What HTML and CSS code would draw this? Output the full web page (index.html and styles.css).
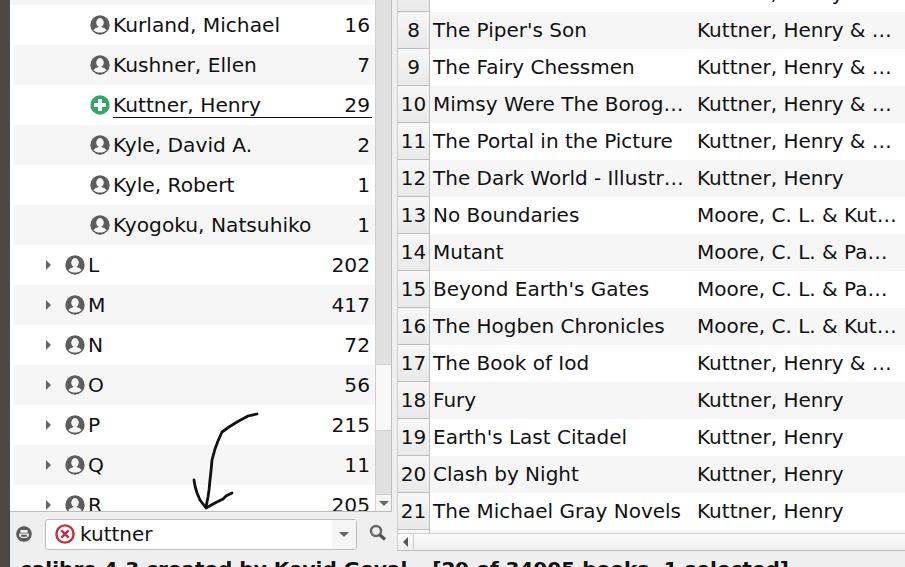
FILE: index.html
```html
<!DOCTYPE html>
<html lang="en">
<head>
    <meta charset="UTF-8">
    <title>calibre</title>
    <link rel="stylesheet" href="styles.css">
</head>
<body>
    <svg class="defs" width="0" height="0">
        <symbol id="person" viewBox="0 0 20 20">
            <circle cx="10" cy="10" r="9.700" fill="#5c5c5c"/>
            <ellipse cx="10" cy="7.600" rx="3.800" ry="4.500" fill="#f4f4f4"/>
            <path d="M3.400 15.300c.8-2.200 4-2.500 5-3.500h3.200c1 1 4.200 1.300 5 3.500-1.500 1.500-4 2.300-6.600 2.300s-5.100-.8-6.600-2.300z" fill="#f4f4f4"/>
        </symbol>
    </svg>

    <div class="side-strip"></div>

    <div class="main">
        <div class="panes">
            <div class="left">
                <div class="tree-wrap">
                    <div class="tree">
                        <div class="row child"><svg class="ic"><use href="#person"/></svg><span class="name">Kurland, Michael</span><span class="count">16</span></div>
                        <div class="row child alt"><svg class="ic"><use href="#person"/></svg><span class="name">Kushner, Ellen</span><span class="count">7</span></div>
                        <div class="row child selected">
                            <svg class="ic" viewBox="0 0 20 20"><circle cx="10" cy="10" r="9.700" fill="#2ea862"/><path d="M8 4h4v4h4v4h-4v4H8v-4H4V8h4z" fill="#fff"/></svg>
                            <span class="underlined"><span class="name">Kuttner, Henry</span><span class="count">29</span></span>
                        </div>
                        <div class="row child alt"><svg class="ic"><use href="#person"/></svg><span class="name">Kyle, David A.</span><span class="count">2</span></div>
                        <div class="row child"><svg class="ic"><use href="#person"/></svg><span class="name">Kyle, Robert</span><span class="count">1</span></div>
                        <div class="row child alt"><svg class="ic"><use href="#person"/></svg><span class="name">Kyogoku, Natsuhiko</span><span class="count">1</span></div>
                        <div class="row"><span class="arrow"></span><svg class="ic"><use href="#person"/></svg><span class="name">L</span><span class="count">202</span></div>
                        <div class="row alt"><span class="arrow"></span><svg class="ic"><use href="#person"/></svg><span class="name">M</span><span class="count">417</span></div>
                        <div class="row"><span class="arrow"></span><svg class="ic"><use href="#person"/></svg><span class="name">N</span><span class="count">72</span></div>
                        <div class="row alt"><span class="arrow"></span><svg class="ic"><use href="#person"/></svg><span class="name">O</span><span class="count">56</span></div>
                        <div class="row"><span class="arrow"></span><svg class="ic"><use href="#person"/></svg><span class="name">P</span><span class="count">215</span></div>
                        <div class="row alt"><span class="arrow"></span><svg class="ic"><use href="#person"/></svg><span class="name">Q</span><span class="count">11</span></div>
                        <div class="row"><span class="arrow"></span><svg class="ic"><use href="#person"/></svg><span class="name">R</span><span class="count">205</span></div>
                    </div>
                    <div class="vbar">
                        <div class="track grow"></div>
                        <div class="thumb"></div>
                        <div class="track low"></div>
                        <div class="step"><span class="tri-down"></span></div>
                    </div>
                </div>
                <div class="search">
                    <svg class="ic-small" viewBox="0 0 20 20"><circle cx="10" cy="10" r="9.800" fill="#5c5c5c"/><path d="M5.500 5h9v3.500h-9zM4 9.500h12v4h-2V15H6v-1.500H4z" fill="#eee"/><path d="M6.500 11h7v2.500h-7z" fill="#5c5c5c"/></svg>
                    <div class="combo">
                        <svg class="clear" viewBox="0 0 20 20"><circle cx="10" cy="10" r="8.600" fill="#fff" stroke="#c8303f" stroke-width="2.400"/><path d="M6.300 6.300l7.400 7.400M13.700 6.300l-7.400 7.400" stroke="#c8303f" stroke-width="2.400"/></svg>
                        <span class="query">kuttner</span>
                        <span class="combo-btn"><span class="tri-down"></span></span>
                    </div>
                    <svg class="lens" viewBox="0 0 18 18"><circle cx="7" cy="7" r="5" fill="none" stroke="#666" stroke-width="2.400"/><path d="M10.500 10.500l5.500 5" stroke="#555" stroke-width="3.200"/></svg>
                </div>
            </div>

            <div class="right">
                <div class="table-wrap">
                    <div class="table">
                        <div class="trow"><span class="num">7</span><span class="title"></span><span class="author">Kuttner, Henry</span></div>
                        <div class="trow alt"><span class="num">8</span><span class="title">The Piper's Son</span><span class="author">Kuttner, Henry &amp; …</span></div>
                        <div class="trow"><span class="num">9</span><span class="title">The Fairy Chessmen</span><span class="author">Kuttner, Henry &amp; …</span></div>
                        <div class="trow alt"><span class="num">10</span><span class="title">Mimsy Were The Borog…</span><span class="author">Kuttner, Henry &amp; …</span></div>
                        <div class="trow"><span class="num">11</span><span class="title">The Portal in the Picture</span><span class="author">Kuttner, Henry &amp; …</span></div>
                        <div class="trow alt"><span class="num">12</span><span class="title">The Dark World - Illustr…</span><span class="author">Kuttner, Henry</span></div>
                        <div class="trow"><span class="num">13</span><span class="title">No Boundaries</span><span class="author">Moore, C. L. &amp; Kut…</span></div>
                        <div class="trow alt"><span class="num">14</span><span class="title">Mutant</span><span class="author">Moore, C. L. &amp; Pa…</span></div>
                        <div class="trow"><span class="num">15</span><span class="title">Beyond Earth's Gates</span><span class="author">Moore, C. L. &amp; Pa…</span></div>
                        <div class="trow alt"><span class="num">16</span><span class="title">The Hogben Chronicles</span><span class="author">Moore, C. L. &amp; Kut…</span></div>
                        <div class="trow"><span class="num">17</span><span class="title">The Book of Iod</span><span class="author">Kuttner, Henry &amp; …</span></div>
                        <div class="trow alt"><span class="num">18</span><span class="title">Fury</span><span class="author">Kuttner, Henry</span></div>
                        <div class="trow"><span class="num">19</span><span class="title">Earth's Last Citadel</span><span class="author">Kuttner, Henry</span></div>
                        <div class="trow alt"><span class="num">20</span><span class="title">Clash by Night</span><span class="author">Kuttner, Henry</span></div>
                        <div class="trow"><span class="num">21</span><span class="title">The Michael Gray Novels</span><span class="author">Kuttner, Henry</span></div>
                        <div class="trow alt"><span class="num"></span></div>
                    </div>
                </div>
                <div class="hbar"><span class="step-left"><span class="tri-left"></span></span><span class="hbar-track"></span></div>
            </div>
        </div>
        <div class="status"><span>calibre 4.3 created by Kovid Goyal</span><span class="book-count">[29 of 34905 books, 1 selected]</span></div>
    </div>

    <svg class="scribble" viewBox="0 0 905 567">
        <path d="M257 414L248 416L237 422L229 427L222 432L218 441L215 449L212 460L211 471L210 480L209 490L208 497L206 507" fill="none" stroke="#111" stroke-width="2.800" stroke-linecap="round" stroke-linejoin="round"/>
        <path d="M194 480L195 486L197 493L200 500L206 508L215 503L223 499L226 496L232 493" fill="none" stroke="#111" stroke-width="2.800" stroke-linecap="round" stroke-linejoin="round"/>
    </svg>
</body>
</html>
```

FILE: styles.css
```css
/* calibre tag browser + book list */
* {
    box-sizing: border-box;
}

html, body {
    margin: 0;
    padding: 0;
    height: 567px;
    overflow: hidden;
}

body {
    display: flex;
    position: relative;
    background: #efefef;
    color: #111;
    font-family: "DejaVu Sans", sans-serif;
    font-size: 20px;
}

.defs {
    position: absolute;
}

.side-strip {
    width: 10px;
    flex: none;
    background: #4d4846;
}

.main {
    flex: 1;
    min-width: 0;
    display: flex;
    flex-direction: column;
}

.panes {
    height: 551px;
    flex: none;
    display: flex;
}

/* left pane */
.left {
    width: 382px;
    flex: none;
    display: flex;
    flex-direction: column;
}

.tree-wrap {
    height: 512px;
    flex: none;
    display: flex;
    border-right: 1px solid #bdbdbd;
    border-bottom: 1px solid #bdbdbd;
    overflow: hidden;
}

.tree {
    flex: 1;
    min-width: 0;
    background: linear-gradient(#f6f6f6 5px, #fff 5px);
    padding-top: 5px;
    padding-left: 4px;
    font-size: 20.2px;
}

.row {
    height: 40px;
    display: flex;
    align-items: center;
    padding-left: 27px;
    padding-right: 5px;
    background: #fff;
}

.row.child {
    padding-left: 76px;
}

.row.alt {
    background: #f6f6f6;
}

.arrow {
    width: 0;
    height: 0;
    margin-right: 14px;
    margin-left: 5px;
    border-left: 5px solid #666;
    border-top: 5px solid transparent;
    border-bottom: 5px solid transparent;
}

.ic {
    width: 20px;
    height: 20px;
    flex: none;
    margin-right: 3px;
}

.name {
    flex: 1;
}

.count {
    flex: none;
}

.underlined {
    flex: 1;
    display: flex;
    margin-right: -2px;
    padding-right: 2px;
    border-bottom: 1px solid #111;
    line-height: 24px;
    margin-top: 1px;
}

.vbar {
    width: 16px;
    flex: none;
    display: flex;
    flex-direction: column;
    border-left: 1px solid #cfcfcf;
    background: #f4f4f4;
}

.track {
    background: #e0e0e0;
}

.grow {
    flex: 1;
}

.thumb {
    height: 67px;
    background: #f8f8f8;
    border-top: 1px solid #d0d0d0;
    border-bottom: 1px solid #d0d0d0;
}

.low {
    height: 63px;
}

.step {
    height: 17px;
    display: flex;
    align-items: center;
    justify-content: center;
    background: #f4f4f4;
    border-top: 1px solid #cfcfcf;
}

.tri-down {
    display: block;
    width: 0;
    height: 0;
    border-top: 5px solid #666;
    border-left: 5px solid transparent;
    border-right: 5px solid transparent;
}

.search {
    flex: 1;
    display: flex;
    align-items: center;
    padding-left: 6px;
    padding-top: 5px;
}

.ic-small {
    width: 16px;
    height: 16px;
    flex: none;
    margin-right: 13px;
}

.combo {
    width: 312px;
    height: 31px;
    flex: none;
    display: flex;
    align-items: center;
    background: #fff;
    border: 1px solid #bdbdbd;
    border-radius: 3px;
    padding-left: 9px;
}

.clear {
    width: 20px;
    height: 20px;
    flex: none;
    margin-right: 5px;
}

.query {
    flex: 1;
}

.combo-btn {
    width: 24px;
    height: 100%;
    display: flex;
    align-items: center;
    justify-content: center;
    background: #f5f5f5;
}

.lens {
    width: 18px;
    height: 18px;
    flex: none;
    margin-left: 12px;
    margin-top: -2px;
}

/* right pane */
.right {
    flex: 1;
    min-width: 0;
    display: flex;
    flex-direction: column;
    padding-left: 5px;
}

.table-wrap {
    flex: 1;
    min-height: 0;
    overflow: hidden;
    background: #fff;
}

.table {
    margin-top: -25px;
}

.trow {
    height: 37px;
    display: flex;
    align-items: center;
}

.trow.alt {
    background: #f6f6f6;
}

.num {
    width: 33px;
    height: 100%;
    flex: none;
    display: flex;
    align-items: center;
    justify-content: center;
    background: linear-gradient(#f7f7f7, #e9e9e9);
    border-right: 1px solid #bdbdbd;
    border-left: 1px solid #cfcfcf;
    border-bottom: 1px solid #bdbdbd;
}

.title {
    width: 267px;
    flex: none;
    padding-left: 3px;
    padding-bottom: 2px;
    white-space: nowrap;
}

.author {
    padding-bottom: 2px;
    white-space: nowrap;
}

.hbar {
    height: 18px;
    flex: none;
    display: flex;
    background: linear-gradient(#fbfbfb, #eeeeee);
    border-top: 1px solid #cfcfcf;
    border-bottom: 1px solid #bdbdbd;
}

.step-left {
    width: 17px;
    display: flex;
    align-items: center;
    justify-content: center;
    border-left: 1px solid #cfcfcf;
    border-right: 1px solid #cfcfcf;
}

.tri-left {
    width: 0;
    height: 0;
    border-right: 5px solid #555;
    border-top: 5px solid transparent;
    border-bottom: 5px solid transparent;
}

.status {
    padding-left: 10px;
    padding-top: 6px;
    font-weight: bold;
    line-height: 24px;
    white-space: nowrap;
}

.book-count {
    margin-left: 25px;
}

/* hand drawn arrow on top of the screenshot */
.scribble {
    position: absolute;
    top: 0;
    left: 0;
    width: 905px;
    height: 567px;
    pointer-events: none;
}
```
